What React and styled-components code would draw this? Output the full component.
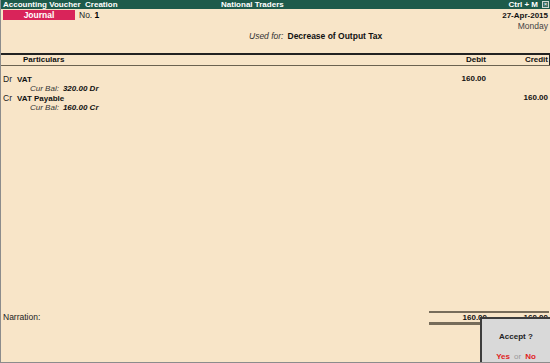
import React from "react";
import styled, { createGlobalStyle } from "styled-components";

const Global = createGlobalStyle`
  html, body { margin: 0; padding: 0; background: #f8e5c8; }
  body { font-family: "Liberation Sans", Arial, sans-serif; }
`;

const Screen = styled.div`
  position: relative;
  width: 550px;
  height: 363px;
  box-sizing: border-box;
  background: #f8e5c8;
  border-left: 1px solid #8c8c8c;
  border-bottom: 1px solid #8c8c8c;
  display: flex;
  flex-direction: column;
  font-size: 8px;
  color: #111;
  overflow: hidden;
`;

const TitleBar = styled.div`
  height: 9px;
  background: #1e5b4b;
  color: #fff;
  font-weight: bold;
  font-size: 8px;
  line-height: 9px;
  display: flex;
  align-items: center;
  padding-left: 2px;
`;

const TitleLeft = styled.div`
  width: 218px;
  white-space: pre;
`;

const TitleCenter = styled.div`
  flex: 1;
`;

const TitleRight = styled.div`
  display: flex;
  align-items: center;
  gap: 4px;
  padding-right: 1px;
`;

const CloseBox = styled.div`
  width: 7px;
  height: 7px;
  box-sizing: border-box;
  border: 1px solid #cfd8d4;
  background: #3b6e61;
  display: flex;
  align-items: center;
  justify-content: center;
  color: #fff;
  font-size: 6px;
  line-height: 5px;
  font-weight: normal;
`;

const HeadRow = styled.div`
  display: flex;
  justify-content: space-between;
  padding: 1px 2px 0 2px;
`;

const HeadLeft = styled.div`
  display: flex;
  align-items: center;
  gap: 4px;
  height: 10px;
`;

const VoucherType = styled.div`
  width: 72px;
  height: 10px;
  background: #d9245a;
  color: #fff;
  font-weight: bold;
  font-size: 8.5px;
  line-height: 10px;
  text-align: center;
`;

const NoLabel = styled.span`
  font-size: 8.5px;
  color: #222;
  b { color: #000; }
`;

const DateBlock = styled.div`
  text-align: right;
  line-height: 10px;
  padding-top: 1px;
`;

const DateText = styled.div`
  font-weight: bold;
  font-size: 8px;
`;

const DayText = styled.div`
  color: #444;
  font-size: 8.5px;
`;

const UsedRow = styled.div`
  padding-left: 248px;
  line-height: 10px;
  font-size: 8.5px;
  i { color: #333; }
  b { margin-left: 4px; }
`;

const TableHead = styled.div`
  margin-top: 12px;
  border-top: 2px solid #222;
  border-bottom: 1px solid #6b6250;
  height: 10px;
  display: flex;
  align-items: center;
  font-weight: bold;
  font-size: 8px;
`;

const Col = styled.div`
  width: ${(p) => p.$w}px;
  flex: ${(p) => (p.$grow ? 1 : "none")};
  text-align: ${(p) => p.$align || "left"};
  padding-left: ${(p) => p.$pl || 0}px;
  padding-right: ${(p) => p.$pr || 0}px;
  box-sizing: border-box;
  border-right: ${(p) => (p.$edge ? "1px solid #222" : "none")};
  align-self: stretch;
  line-height: 10px;
`;

const Entries = styled.div`
  padding-top: 8px;
  flex: 1;
`;

const EntryRow = styled.div`
  display: flex;
  line-height: 10px;
  height: 10px;
`;

const Side = styled.span`
  display: inline-block;
  width: 14px;
  padding-left: 2px;
  font-size: 8.5px;
  color: #222;
`;

const Ledger = styled.span`
  font-weight: bold;
  font-size: 8px;
`;

const Amount = styled.div`
  width: ${(p) => p.$w}px;
  text-align: right;
  font-weight: bold;
  font-size: 8px;
  padding-right: ${(p) => p.$pr || 0}px;
  box-sizing: border-box;
`;

const BalRow = styled.div`
  padding-left: 29px;
  line-height: 9px;
  height: 9px;
  font-style: italic;
  i { color: #333; font-size: 8px; }
  b { margin-left: 4px; font-size: 8px; }
`;

const Footer = styled.div`
  display: flex;
  align-items: flex-end;
  height: 60px;
  padding-bottom: 37px;
  box-sizing: border-box;
`;

const Narration = styled.div`
  flex: 1;
  padding-left: 2px;
  color: #222;
  font-size: 8.5px;
  line-height: 10px;
  margin-bottom: 3px;
`;

const Totals = styled.div`
  width: 120px;
  border-top: 2px solid #776c5a;
  border-bottom: 3px solid #776c5a;
  display: flex;
  height: 9px;
  line-height: 9px;
  margin-right: 1px;
`;

const Popup = styled.div`
  position: absolute;
  right: 0;
  bottom: 0;
  width: 70px;
  height: 45px;
  box-sizing: border-box;
  background: #d9d9d9;
  border: 2px solid #3d3d3d;
  border-bottom: none;
  border-right: none;
  display: flex;
  flex-direction: column;
  align-items: center;
  font-size: 8px;
`;

const Ask = styled.div`
  font-weight: bold;
  color: #222;
  margin-top: 13px;
`;

const Choice = styled.div`
  margin-top: 11px;
  font-weight: bold;
  color: #e01e1e;
  span { color: #999; font-weight: normal; margin: 0 4px; }
`;

export default function App() {
  return (
    <>
      <Global />
      <Screen>
        <TitleBar>
          <TitleLeft>{"Accounting Voucher  Creation"}</TitleLeft>
          <TitleCenter>National Traders</TitleCenter>
          <TitleRight>
            <span>Ctrl + M</span>
            <CloseBox>×</CloseBox>
          </TitleRight>
        </TitleBar>
        <HeadRow>
          <HeadLeft>
            <VoucherType>Journal</VoucherType>
            <NoLabel>
              No. <b>1</b>
            </NoLabel>
          </HeadLeft>
          <DateBlock>
            <DateText>27-Apr-2015</DateText>
            <DayText>Monday</DayText>
          </DateBlock>
        </HeadRow>
        <UsedRow>
          <i>Used for:</i>
          <b>Decrease of Output Tax</b>
        </UsedRow>
        <TableHead>
          <Col $grow $pl={22}>Particulars</Col>
          <Col $w={62} $align="right" $pr={2}>Debit</Col>
          <Col $w={62} $align="right" $edge $pr={1}>Credit</Col>
        </TableHead>
        <Entries>
          <EntryRow>
            <Col $grow>
              <Side>Dr</Side>
              <Ledger>VAT</Ledger>
            </Col>
            <Amount $w={62} $pr={2}>160.00</Amount>
            <Amount $w={62}></Amount>
          </EntryRow>
          <BalRow>
            <i>Cur Bal:</i>
            <b>320.00 Dr</b>
          </BalRow>
          <EntryRow>
            <Col $grow>
              <Side>Cr</Side>
              <Ledger>VAT Payable</Ledger>
            </Col>
            <Amount $w={62}></Amount>
            <Amount $w={62} $pr={2}>160.00</Amount>
          </EntryRow>
          <BalRow>
            <i>Cur Bal:</i>
            <b>160.00 Cr</b>
          </BalRow>
        </Entries>
        <Footer>
          <Narration>Narration:</Narration>
          <Totals>
            <Amount $w={58}>160.00</Amount>
            <Amount $w={62} $pr={1}>160.00</Amount>
          </Totals>
        </Footer>
        <Popup>
          <Ask>Accept ?</Ask>
          <Choice>
            Yes<span>or</span>No
          </Choice>
        </Popup>
      </Screen>
    </>
  );
}
